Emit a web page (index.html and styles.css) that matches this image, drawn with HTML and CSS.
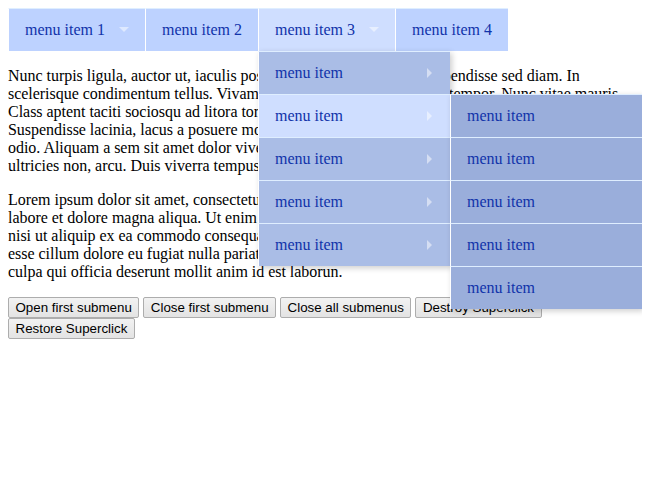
FILE: index.html
```
<!DOCTYPE html>
<html>
<head>
<meta charset="utf-8">
<link rel="stylesheet" href="styles.css">
</head>
<body>
<ul class="sf-menu">
  <li class="top"><a class="with-ul down" href="#">menu item 1</a></li>
  <li class="top"><a href="#">menu item 2</a></li>
  <li class="top hover"><a class="with-ul down" href="#">menu item 3</a>
    <ul class="sub">
      <li><a class="with-ul right" href="#">menu item</a></li>
      <li class="hover"><a class="with-ul right" href="#">menu item</a>
        <ul class="sub sub2">
          <li><a href="#">menu item</a></li>
          <li><a href="#">menu item</a></li>
          <li><a href="#">menu item</a></li>
          <li><a href="#">menu item</a></li>
          <li><a href="#">menu item</a></li>
        </ul>
      </li>
      <li><a class="with-ul right" href="#">menu item</a></li>
      <li><a class="with-ul right" href="#">menu item</a></li>
      <li><a class="with-ul right" href="#">menu item</a></li>
    </ul>
  </li>
  <li class="top"><a href="#">menu item 4</a></li>
</ul>
<p>Nunc turpis ligula, auctor ut, iaculis posuere, congue eu, sapien. Suspendisse sed diam. In scelerisque condimentum tellus. Vivamus quam tellus vel nisl mollis tempor. Nunc vitae mauris. Class aptent taciti sociosqu ad litora torquent per conubia nostra, per inceptos hymenaeos. Suspendisse lacinia, lacus a posuere molestie, arcu elit tincidunt mi, vitae mattis erat massa vel odio. Aliquam a sem sit amet dolor viverra aliquet. Morbi nec nulla, eleifend vitae, tristique sed, ultricies non, arcu. Duis viverra tempus ligula.</p>
<p>Lorem ipsum dolor sit amet, consectetur adipisicing elit, sed do eiusmod tempor incididunt ut labore et dolore magna aliqua. Ut enim ad minim veniam, quis nostrud exercitation ullamco laboris nisi ut aliquip ex ea commodo consequat. Duis aute irure dolor in reprehenderit in voluptate velit esse cillum dolore eu fugiat nulla pariatur. Excepteur sint occaecat cupidatat non proident, sunt in culpa qui officia deserunt mollit anim id est laborun.</p>
<div class="buttons">
  <button>Open first submenu</button>
  <button>Close first submenu</button>
  <button>Close all submenus</button>
  <button>Destroy Superclick</button>
  <button>Restore Superclick</button>
</div>
</body>
</html>
```

FILE: styles.css
```
html, body {
  background: #fff;
}
body {
  margin: 8px;
  font-family: "Liberation Serif", "Times New Roman", serif;
  font-size: 16px;
  line-height: 18px;
  color: #000;
}
.sf-menu, .sf-menu ul {
  list-style: none;
  margin: 0;
  padding: 0;
}
.sf-menu {
  display: flex;
  margin-bottom: 16px;
}
.sf-menu li {
  position: relative;
  background: #BDD2FF;
  white-space: nowrap;
}
.sf-menu a {
  display: block;
  position: relative;
  border-left: 1px solid #fff;
  border-top: 1px solid #dfeeff;
  padding: 12px 16px;
  text-decoration: none;
  color: #1133aa;
}
.sf-menu .sub {
  position: absolute;
  top: 100%;
  left: 0;
  width: 192px;
  z-index: 99;
  box-shadow: 2px 2px 6px rgba(0,0,0,.2);
}
.sf-menu .sub li {
  background: #AABDE6;
}
.sf-menu .sub .sub2 {
  top: 0;
  left: 100%;
}
.sf-menu .sub .sub2 li {
  background: #9AAEDB;
}
.sf-menu li.hover, .sf-menu .sub li.hover {
  background: #CFDEFF;
}
.sf-menu .with-ul {
  padding-right: 40px;
}
.sf-menu .with-ul::after {
  content: '';
  position: absolute;
  top: 50%;
  right: 16px;
  margin-top: -3px;
  width: 0;
  height: 0;
  border: 5px solid transparent;
  border-top-color: rgba(255,255,255,.5);
}
.sf-menu .with-ul.right::after {
  margin-top: -5px;
  margin-right: -3px;
  border-color: transparent;
  border-left-color: rgba(255,255,255,.5);
}
p {
  margin: 0 0 16px;
  letter-spacing: -0.03px;
}
.buttons {
  display: flex;
  flex-wrap: wrap;
  column-gap: 4px;
  row-gap: 0;
}
button {
  font-family: "Liberation Sans", Arial, sans-serif;
  font-size: 13.333px;
  line-height: 17px;
  height: 21px;
  color: #000;
  padding: 1px 6.5px;
  margin: 0;
  border: 1px solid #adadad;
  border-radius: 2px;
  background: linear-gradient(#f2f2f2, #e3e3e3);
}
```
